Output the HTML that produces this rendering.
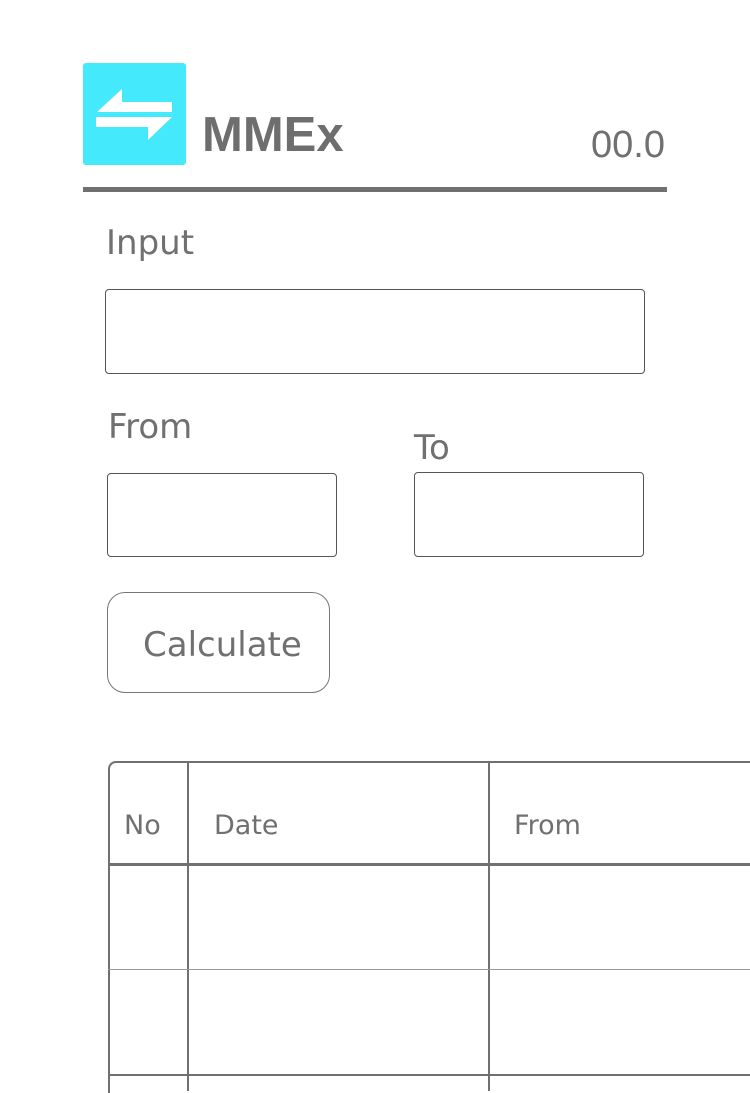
<!DOCTYPE html>
<html><head><meta charset="utf-8"><style>
body{margin:0;width:750px;height:1080px;background:#fff;position:relative;overflow:hidden;font-family:"DejaVu Sans","Liberation Sans",sans-serif;color:#707070}
.a{position:absolute}
.box{position:absolute;border:1px solid #555;border-radius:4px;box-sizing:border-box}
.t{position:absolute;white-space:nowrap}
</style></head><body>
<div class="a" style="left:83px;top:63px;width:103px;height:102px;background:#44eafc;border-radius:3px"></div>
<svg class="a" style="left:0;top:0" width="750" height="200"><polygon fill="#fff" points="97,112 122,89 122,102 172,102 172,112"/><polygon fill="#fff" points="96,117 172,117 148,140 148,127 96,127"/></svg>
<div class="t" style="left:202px;top:107px;font-size:49px;font-weight:bold;font-family:'Liberation Sans',sans-serif;color:#6e6e6e">MMEx</div>
<div class="t" style="left:591px;top:124px;font-size:38px;font-family:'Liberation Sans',sans-serif">00.0</div>
<div class="a" style="left:83px;top:187px;width:584px;height:5px;background:#707070"></div>
<div class="t" style="left:106px;top:223px;font-size:34px">Input</div>
<div class="box" style="left:105px;top:289px;width:540px;height:85px"></div>
<div class="t" style="left:108px;top:407px;font-size:34px">From</div>
<div class="t" style="left:414px;top:428px;font-size:34px">To</div>
<div class="box" style="left:107px;top:473px;width:230px;height:84px"></div>
<div class="box" style="left:414px;top:472px;width:230px;height:85px"></div>
<div class="box" style="left:107px;top:592px;width:223px;height:101px;border-radius:18px;border-color:#777"></div>
<div class="t" style="left:143px;top:625px;font-size:34px">Calculate</div>
<div class="a" style="left:108px;top:761px;width:660px;height:330px;border-left:2px solid #707070;border-top:2px solid #707070;border-top-left-radius:8px"></div>
<div class="a" style="left:187px;top:761px;width:2px;height:330px;background:#707070"></div>
<div class="a" style="left:488px;top:761px;width:2px;height:330px;background:#707070"></div>
<div class="a" style="left:108px;top:863px;width:660px;height:3px;background:#707070"></div>
<div class="a" style="left:108px;top:969px;width:660px;height:1px;background:#999"></div>
<div class="a" style="left:108px;top:1074px;width:660px;height:2px;background:#707070"></div>
<div class="t" style="left:124px;top:810px;font-size:27px">No</div>
<div class="t" style="left:214px;top:810px;font-size:27px">Date</div>
<div class="t" style="left:514px;top:810px;font-size:27px">From</div>
</body></html>
